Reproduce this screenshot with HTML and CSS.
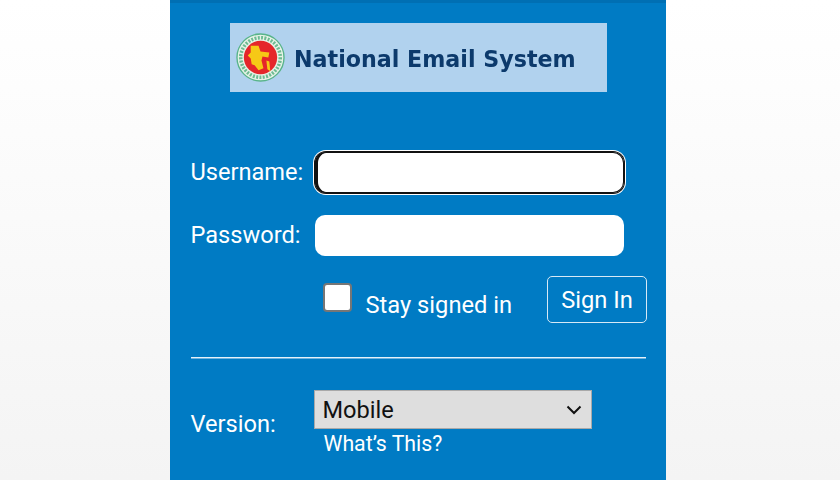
FILE: index.html
```html
<!DOCTYPE html>
<html lang="en">
<head>
<meta charset="utf-8">
<title>National Email System</title>
<link rel="stylesheet" href="styles.css">
</head>
<body>
<main class="panel">
  <div class="banner-wrap">
    <div class="banner">
      <svg class="emblem" viewBox="0 0 50 50" aria-hidden="true">
        <circle cx="25" cy="25" r="24" fill="#e6f2e6" stroke="#58b48a" stroke-width="1.4"/>
        <circle cx="25" cy="25" r="20.200" fill="none" stroke="#6dbb92" stroke-width="3.600" stroke-dasharray="2 1.400"/>
        <circle cx="25" cy="25" r="17" fill="#e5262a"/>
        <path d="M15 13h8l2 6 9 1-1 5-6-1-1 4 2 8-5 2-4-5-3-1-1-6-3-3 3-3z" fill="#f6c916"/>
        <path d="M31 28l3 1 1 10-3-2z" fill="#f6c916"/>
      </svg>
      <span class="banner-text">National Email System</span>
    </div>
  </div>
  <form class="login">
    <div class="row row-user">
      <label class="label" for="user">Username:</label>
      <input class="field field-focus" id="user" type="text">
    </div>
    <div class="row row-pass">
      <label class="label" for="pass">Password:</label>
      <input class="field" id="pass" type="password">
    </div>
    <div class="row-sign">
      <span class="check-box"></span>
      <label class="stay">Stay signed in</label>
      <button class="sign" type="button">Sign In</button>
    </div>
    <hr class="rule">
    <div class="row-version">
      <label class="label version-label">Version:</label>
      <div class="version-col">
        <div class="select">
          <span>Mobile</span>
          <svg class="chev" viewBox="0 0 16 10" aria-hidden="true"><path d="M1.500 1.500L8 8l6.500-6.500" fill="none" stroke="#111" stroke-width="2"/></svg>
        </div>
        <a class="whats" href="#">What’s This?</a>
      </div>
    </div>
  </form>
</main>
</body>
</html>
```
FILE: styles.css
```css
* { box-sizing: border-box; }
html, body { height: 100%; }
body {
  margin: 0;
  height: 480px;
  overflow: hidden;
  background: linear-gradient(#ffffff 0, #f4f4f4 100%);
  font-family: Roboto, "Liberation Sans", sans-serif;
  color: #fff;
}
.panel {
  width: 496px;
  height: 480px;
  margin-left: 170px;
  background: #007bc4;
  border-top: 3px solid #006fb3;
  padding: 20px 20px 0 21px;
}
.banner-wrap { padding-left: 39px; }
.banner {
  width: 377px;
  height: 69px;
  background: #b1d2ee;
  display: flex;
  align-items: center;
  padding-left: 6px;
  gap: 9px;
}
.emblem { width: 49px; height: 49px; flex: none; filter: blur(0.4px); }
.banner-text {
  font-family: "DejaVu Sans", sans-serif;
  font-weight: 700;
  font-size: 22.200px;
  line-height: 26px;
  margin-top: 3px;
  color: #0c3a6c;
  white-space: nowrap;
  filter: blur(0.4px);
}
.login { margin-top: 60px; }
.row { display: flex; align-items: center; height: 41px; }
.row-pass { margin-top: 22px; }
.label { font-size: 23.600px; line-height: 28px; width: 124px; flex: none; margin: -2px 0 0 -0.500px; }
.field {
  width: 309px;
  height: 41px;
  border: 0;
  border-radius: 10px;
  background: #fff;
  padding: 0;
}
.field-focus {
  outline: 0;
  border-radius: 11px;
  margin-left: 0.500px;
  box-shadow: inset 3px 0 0 #111, inset 0 0 0 1px #111, 0 0 0 1px #111, 0 0 0 2px #fff;
}
.row-pass .field { margin-left: 0.500px; }
.row-sign {
  display: flex;
  align-items: flex-start;
  margin-top: 20px;
  padding-left: 132px;
}
.check-box {
  width: 29px;
  height: 29px;
  margin-top: 7px;
  background: #fff;
  border: 2px solid #767676;
  border-radius: 4px;
  flex: none;
}
.stay { font-size: 23.700px; line-height: 28px; margin: 15px 0 0 13.500px; white-space: nowrap; }
.sign {
  width: 100px;
  height: 47px;
  margin-left: auto;
  margin-right: -1px;
  background: transparent;
  color: #fff;
  border: 1px solid #d7e9f6;
  border-radius: 5px;
  font: inherit;
  font-size: 23.700px;
  padding: 0;
}
.rule {
  border: 0;
  border-top: 1px solid #e6f1f9;
  border-bottom: 1px solid #6db3df;
  height: 2px;
  margin: 34px 0 0;
}
.row-version { display: flex; margin-top: 31px; }
.version-label { width: 123px; margin-top: 20px; }
.version-col { display: flex; flex-direction: column; }
.select {
  width: 278px;
  height: 39px;
  background: #dedede;
  border: 1px solid #a9a9a9;
  color: #111;
  font-size: 23.600px;
  display: flex;
  align-items: center;
  justify-content: space-between;
  padding: 0 9px 0 8px;
}
.chev { width: 16px; height: 10px; }
.whats { color: #fff; text-decoration: none; font-size: 21.300px; line-height: 26px; margin: 2px 0 0 10px; }
```
